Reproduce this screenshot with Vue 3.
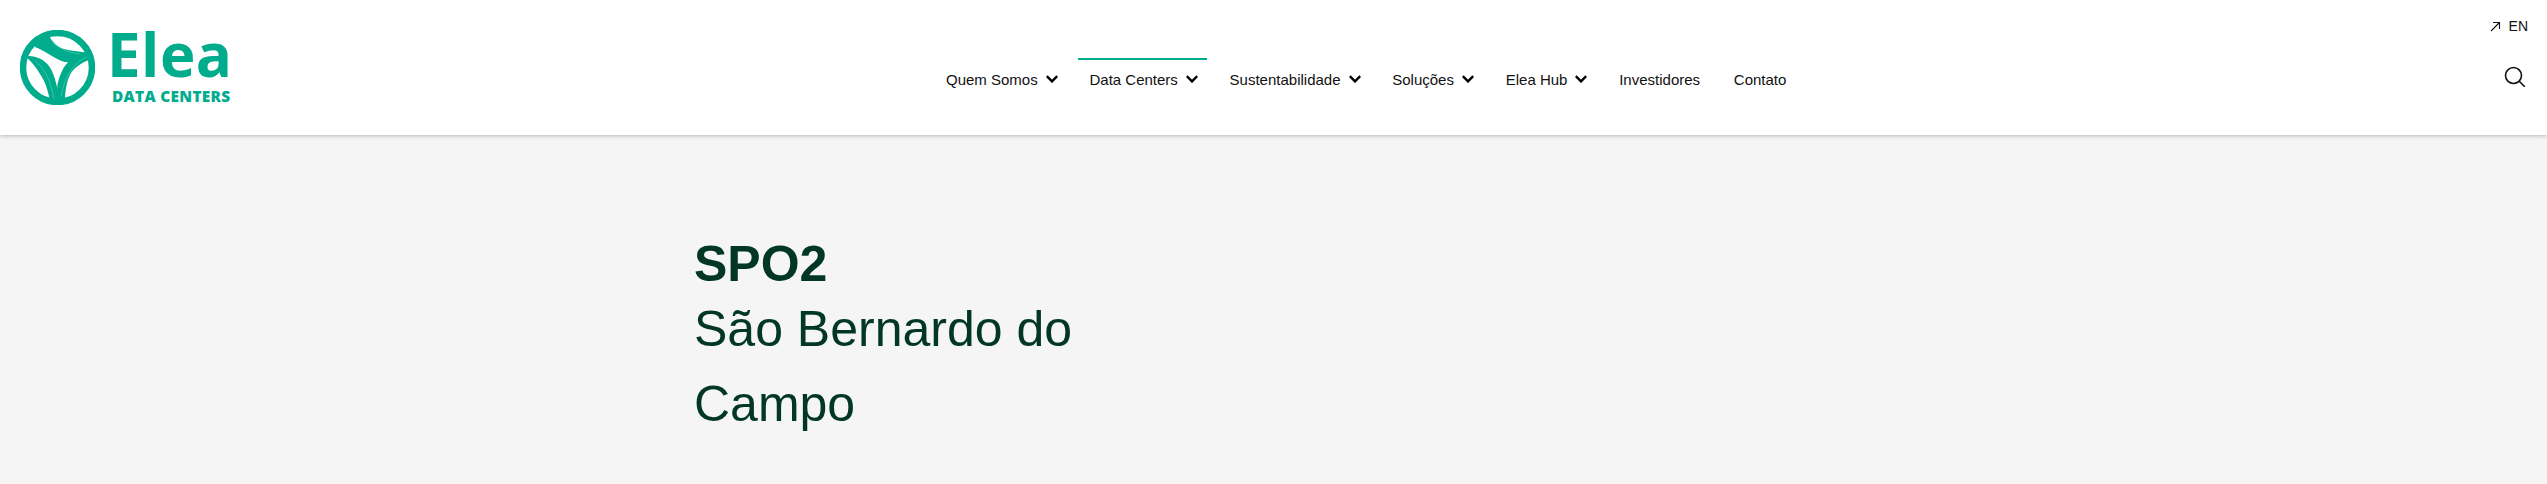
<script setup>
const menu = [
  { label: 'Quem Somos', arrow: true },
  { label: 'Data Centers', arrow: true, active: true },
  { label: 'Sustentabilidade', arrow: true },
  { label: 'Soluções', arrow: true },
  { label: 'Elea Hub', arrow: true },
  { label: 'Investidores' },
  { label: 'Contato' }
]
</script>

<template>
  <div class="page">
    <header class="topbar">
      <a class="logo" href="#">
        <svg class="logo-mark" viewBox="0 0 75 75" width="75" height="75">
          <circle cx="37.5" cy="37.5" r="34.5" fill="none" stroke="#00ac8c" stroke-width="6.5" />
          <path d="M15 13 L29 5 C32 13 38 17.5 44 19 C51 21 58 21 67 23 C60 29 52 33 45 32 C36 30 28 22 15 17 Z" fill="#00ac8c" />
          <path d="M5 26 C17 25 27 30 32 41 C36 50 38 60 39 71 L30 71 C28 60 25 51 20 44 C16 37 11 31 5 26 Z" fill="#00ac8c" />
          <path d="M65 22 C55 26 46 32 42 41 C39 47 37 54 37 60 L37 71 L45 70 C45 60 47 50 51 43 C55 37 62 32 72 29 Z" fill="#00ac8c" />
          <path d="M33 11 C38 18 46 22 60 24" fill="none" stroke="#55d2bb" stroke-width=".6" />
          <path d="M15 31 C25 38 31 52 34 69" fill="none" stroke="#55d2bb" stroke-width=".6" />
          <path d="M67 27 C55 32 45 44 41 67" fill="none" stroke="#55d2bb" stroke-width=".6" />
        </svg>
        <span class="logo-text">
          <span class="logo-name">Elea</span>
          <span class="logo-sub">DATA CENTERS</span>
        </span>
      </a>

      <nav class="menu">
        <a v-for="item in menu" :key="item.label" class="menu-item" :class="{ active: item.active }" href="#">
          {{ item.label }}
          <svg v-if="item.arrow" class="chevron" viewBox="0 0 12 8" width="12" height="8">
            <path d="M.8 1.2 6 6.4l5.2-5.2" fill="none" stroke="#000" stroke-width="2.4" />
          </svg>
        </a>
      </nav>

      <div class="tools">
        <a class="lang" href="#">
          <svg viewBox="0 0 11 11" width="11" height="11">
            <path d="M1 10 9.5 1.5M3 1.5h6.5V8" fill="none" stroke="#111" stroke-width="1.1" />
          </svg>
          EN
        </a>
        <svg class="search" viewBox="0 0 22 22" width="22" height="22">
          <circle cx="9.5" cy="9.5" r="8" fill="none" stroke="#111" stroke-width="1.6" />
          <path d="m15.2 15.2 5.6 5.6" fill="none" stroke="#111" stroke-width="1.6" />
        </svg>
      </div>
    </header>

    <main class="hero">
      <h1 class="code">SPO2</h1>
      <p class="city">São Bernardo do<br />Campo</p>
    </main>
  </div>
</template>

<style>
html, body {
  margin: 0;
  background: #f5f5f5;
}
</style>

<style scoped>
.page {
  height: 484px;
  overflow: hidden;
  background: #f5f5f5;
  font-family: "Liberation Sans", Arial, sans-serif;
}
.topbar {
  display: grid;
  grid-template-columns: 935px auto 1fr;
  height: 135px;
  background: #fff;
  box-shadow: 0 1px 4px rgba(0, 0, 0, .25);
}
.logo {
  display: flex;
  align-items: flex-start;
  gap: 17px;
  padding: 30px 0 0 20px;
  text-decoration: none;
  color: #00ac8c;
}
.logo-text {
  display: flex;
  flex-direction: column;
  margin-top: -5px;
}
.logo-name {
  font-family: "Open Sans", sans-serif;
  font-size: 60px;
  font-weight: 700;
  line-height: 58px;
  letter-spacing: .5px;
  margin-left: -5px;
}
.logo-sub {
  font-family: "Open Sans", sans-serif;
  font-size: 15.4px;
  font-weight: 800;
  line-height: 20px;
  letter-spacing: .3px;
  margin-top: 4px;
}
.menu {
  display: flex;
  margin-top: 58px;
  height: 40px;
}
.menu-item {
  display: flex;
  align-items: center;
  gap: 8px;
  padding: 0 11px;
  margin-right: 11.75px;
  height: 40px;
  border-top: 2px solid transparent;
  box-sizing: border-box;
  font-size: 15px;
  color: #111;
  text-decoration: none;
  white-space: nowrap;
}
.menu-item.active {
  border-top-color: #00ac8c;
}
.chevron {
  margin-right: -2px;
}
.tools {
  justify-self: end;
  display: flex;
  flex-direction: column;
  align-items: flex-end;
  gap: 32px;
  padding: 18px 19px 0 0;
}
.lang {
  display: flex;
  align-items: center;
  gap: 8px;
  font-size: 14px;
  line-height: 16px;
  color: #111;
  text-decoration: none;
}
.search {
  margin-right: 2px;
}
.hero {
  margin-left: 694px;
  padding-top: 102px;
  color: #023626;
}
.code {
  margin: 0;
  font-size: 50px;
  font-weight: 700;
  line-height: 55px;
}
.city {
  margin: 0;
  font-size: 50px;
  line-height: 75px;
}
</style>
